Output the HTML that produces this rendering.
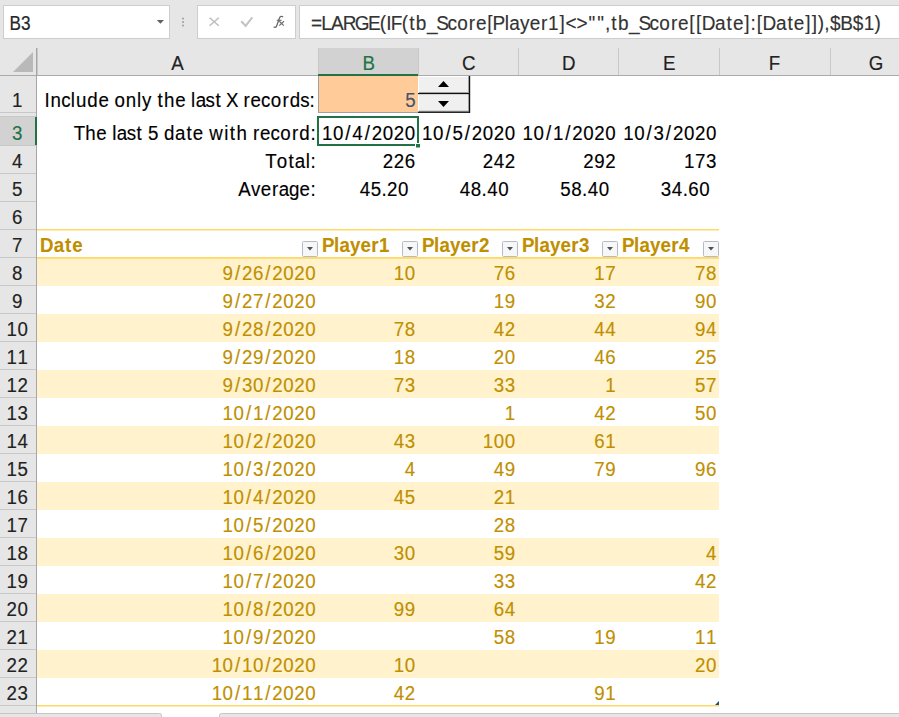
<!DOCTYPE html>
<html><head><meta charset="utf-8"><style>
html,body{margin:0;padding:0;width:899px;height:717px;overflow:hidden;background:#fff}
svg{display:block}
text{font-family:"Liberation Sans",sans-serif}
</style></head><body>
<svg width="899" height="717" viewBox="0 0 899 717">
<rect x="0" y="0" width="899" height="717" fill="#ffffff" />
<rect x="0" y="0" width="899" height="48" fill="#e6e6e6" />
<rect x="3.5" y="5.5" width="166" height="33" fill="#ffffff" stroke="#cdcdcd" stroke-width="1"/>
<text x="9.6" y="29.7" fill="#262626" font-size="19.5" textLength="21.00" lengthAdjust="spacingAndGlyphs" stroke="#262626" stroke-width="0.2">B3</text>
<path d="M156.8 20 L164 20 L160.4 23.8 Z" fill="#5e626a"/>
<rect x="182.2" y="17.7" width="1.7" height="1.7" fill="#9c9c9c" />
<rect x="182.2" y="21.2" width="1.7" height="1.7" fill="#9c9c9c" />
<rect x="182.2" y="24.7" width="1.7" height="1.7" fill="#9c9c9c" />
<rect x="197.5" y="5.5" width="98" height="33" fill="#ffffff" stroke="#cdcdcd" stroke-width="1"/>
<path d="M209.6 17.8 L218.8 25.8 M218.8 17.8 L209.6 25.8" stroke="#bdbdbd" stroke-width="1.5" fill="none"/>
<path d="M241.2 21.3 L245.6 25.8 L252.3 17.3" stroke="#c4c4c4" stroke-width="2.1" fill="none"/>
<path d="M283 17.2 C282.2 16 280.2 15.9 279.5 18 L276.6 26 C276 27.6 274.8 27.6 273.6 26.8" stroke="#6a6a6a" stroke-width="1.3" fill="none"/>
<path d="M276.8 20.3 L281.6 20.3" stroke="#6a6a6a" stroke-width="1.1" fill="none"/>
<path d="M279.3 21.2 L283.8 25.6 M284 21.2 L279.2 25.6" stroke="#707078" stroke-width="1.2" fill="none"/>
<rect x="299.5" y="5.5" width="640" height="33" fill="#ffffff" stroke="#cdcdcd" stroke-width="1"/>
<text x="323.90 334.64 344.82 356.93 369.63 383.35 395.59 402.41 407.14 418.50 426.25 433.20 444.77 454.51 466.12 476.29 488.38 495.72 507.55 512.98 525.81 530.50 541.57 551.74 563.50 570.94 582.87 589.02 600.46 612.97 622.02 630.12 636.72 643.68 655.25 664.98 676.59 686.76 698.86 706.20 718.02 724.94 730.94 744.93 756.87 763.51 775.34 781.81 788.29 794.29 808.28 820.23 826.87 838.69 845.60 851.94 858.72 864.50 875.26 888.22 899.66 911.01" y="29.7" fill="#333" stroke="#333" stroke-width="0.15" font-size="19.8"  transform="scale(0.96 1)">=LARGE(IF(tb_Score[Player1]&lt;&gt;&quot;&quot;,tb_Score[[Date]:[Date]]),$B$1)</text>
<rect x="0" y="48" width="899" height="27" fill="#e6e6e6" />
<rect x="318" y="48" width="100" height="26" fill="#d2d2d2" />
<rect x="37" y="48" width="1" height="27" fill="#c8c8c8"/>
<rect x="318" y="48" width="1" height="27" fill="#c8c8c8"/>
<rect x="418" y="48" width="1" height="27" fill="#c8c8c8"/>
<rect x="518" y="48" width="1" height="27" fill="#c8c8c8"/>
<rect x="618" y="48" width="1" height="27" fill="#c8c8c8"/>
<rect x="719" y="48" width="1" height="27" fill="#c8c8c8"/>
<rect x="830" y="48" width="1" height="27" fill="#c8c8c8"/>
<text x="178.39" y="70" fill="#222" stroke="#222" stroke-width="0.15" font-size="19.5"  transform="scale(0.96 1)">A</text>
<text x="377.66" y="70" fill="#217346" stroke="#217346" stroke-width="0.15" font-size="19.5"  transform="scale(0.96 1)">B</text>
<text x="481.29" y="70" fill="#222" stroke="#222" stroke-width="0.15" font-size="19.5"  transform="scale(0.96 1)">C</text>
<text x="585.46" y="70" fill="#222" stroke="#222" stroke-width="0.15" font-size="19.5"  transform="scale(0.96 1)">D</text>
<text x="690.68" y="70" fill="#222" stroke="#222" stroke-width="0.15" font-size="19.5"  transform="scale(0.96 1)">E</text>
<text x="800.82" y="70" fill="#222" stroke="#222" stroke-width="0.15" font-size="19.5"  transform="scale(0.96 1)">F</text>
<text x="904.92" y="70" fill="#222" stroke="#222" stroke-width="0.15" font-size="19.5"  transform="scale(0.96 1)">G</text>
<rect x="0" y="75" width="899" height="1" fill="#ababab"/>
<rect x="318" y="74" width="100" height="2" fill="#217346" />
<path d="M13 72 L33 72 L33 52 Z" fill="#b9b9b9"/>
<rect x="0" y="76" width="36" height="641" fill="#e6e6e6" />
<rect x="0" y="117" width="35" height="28" fill="#d2d2d2" />
<rect x="0" y="112" width="36" height="1" fill="#c8c8c8"/>
<rect x="0" y="116" width="36" height="1" fill="#c8c8c8"/>
<rect x="0" y="145" width="36" height="1" fill="#c8c8c8"/>
<rect x="0" y="173" width="36" height="1" fill="#c8c8c8"/>
<rect x="0" y="201" width="36" height="1" fill="#c8c8c8"/>
<rect x="0" y="229" width="36" height="1" fill="#c8c8c8"/>
<rect x="0" y="257" width="36" height="1" fill="#c8c8c8"/>
<rect x="0" y="285" width="36" height="1" fill="#c8c8c8"/>
<rect x="0" y="313" width="36" height="1" fill="#c8c8c8"/>
<rect x="0" y="341" width="36" height="1" fill="#c8c8c8"/>
<rect x="0" y="369" width="36" height="1" fill="#c8c8c8"/>
<rect x="0" y="397" width="36" height="1" fill="#c8c8c8"/>
<rect x="0" y="425" width="36" height="1" fill="#c8c8c8"/>
<rect x="0" y="453" width="36" height="1" fill="#c8c8c8"/>
<rect x="0" y="481" width="36" height="1" fill="#c8c8c8"/>
<rect x="0" y="509" width="36" height="1" fill="#c8c8c8"/>
<rect x="0" y="537" width="36" height="1" fill="#c8c8c8"/>
<rect x="0" y="565" width="36" height="1" fill="#c8c8c8"/>
<rect x="0" y="593" width="36" height="1" fill="#c8c8c8"/>
<rect x="0" y="621" width="36" height="1" fill="#c8c8c8"/>
<rect x="0" y="649" width="36" height="1" fill="#c8c8c8"/>
<rect x="0" y="677" width="36" height="1" fill="#c8c8c8"/>
<rect x="0" y="705" width="36" height="1" fill="#c8c8c8"/>
<rect x="0" y="733" width="36" height="1" fill="#c8c8c8"/>
<text x="12.60" y="107" fill="#222" stroke="#222" stroke-width="0.15" font-size="19.5"  transform="scale(0.96 1)">1</text>
<text x="12.60" y="140" fill="#217346" stroke="#217346" stroke-width="0.15" font-size="19.5"  transform="scale(0.96 1)">3</text>
<text x="12.60" y="168" fill="#222" stroke="#222" stroke-width="0.15" font-size="19.5"  transform="scale(0.96 1)">4</text>
<text x="12.60" y="196" fill="#222" stroke="#222" stroke-width="0.15" font-size="19.5"  transform="scale(0.96 1)">5</text>
<text x="12.60" y="224" fill="#222" stroke="#222" stroke-width="0.15" font-size="19.5"  transform="scale(0.96 1)">6</text>
<text x="12.60" y="252" fill="#222" stroke="#222" stroke-width="0.15" font-size="19.5"  transform="scale(0.96 1)">7</text>
<text x="12.60" y="280" fill="#222" stroke="#222" stroke-width="0.15" font-size="19.5"  transform="scale(0.96 1)">8</text>
<text x="12.60" y="308" fill="#222" stroke="#222" stroke-width="0.15" font-size="19.5"  transform="scale(0.96 1)">9</text>
<text x="6.88 18.32" y="336" fill="#222" stroke="#222" stroke-width="0.15" font-size="19.5"  transform="scale(0.96 1)">10</text>
<text x="6.88 18.32" y="364" fill="#222" stroke="#222" stroke-width="0.15" font-size="19.5"  transform="scale(0.96 1)">11</text>
<text x="6.88 18.32" y="392" fill="#222" stroke="#222" stroke-width="0.15" font-size="19.5"  transform="scale(0.96 1)">12</text>
<text x="6.88 18.32" y="420" fill="#222" stroke="#222" stroke-width="0.15" font-size="19.5"  transform="scale(0.96 1)">13</text>
<text x="6.88 18.32" y="448" fill="#222" stroke="#222" stroke-width="0.15" font-size="19.5"  transform="scale(0.96 1)">14</text>
<text x="6.88 18.32" y="476" fill="#222" stroke="#222" stroke-width="0.15" font-size="19.5"  transform="scale(0.96 1)">15</text>
<text x="6.88 18.32" y="504" fill="#222" stroke="#222" stroke-width="0.15" font-size="19.5"  transform="scale(0.96 1)">16</text>
<text x="6.88 18.32" y="532" fill="#222" stroke="#222" stroke-width="0.15" font-size="19.5"  transform="scale(0.96 1)">17</text>
<text x="6.88 18.32" y="560" fill="#222" stroke="#222" stroke-width="0.15" font-size="19.5"  transform="scale(0.96 1)">18</text>
<text x="6.88 18.32" y="588" fill="#222" stroke="#222" stroke-width="0.15" font-size="19.5"  transform="scale(0.96 1)">19</text>
<text x="6.88 18.32" y="616" fill="#222" stroke="#222" stroke-width="0.15" font-size="19.5"  transform="scale(0.96 1)">20</text>
<text x="6.88 18.32" y="644" fill="#222" stroke="#222" stroke-width="0.15" font-size="19.5"  transform="scale(0.96 1)">21</text>
<text x="6.88 18.32" y="672" fill="#222" stroke="#222" stroke-width="0.15" font-size="19.5"  transform="scale(0.96 1)">22</text>
<text x="6.88 18.32" y="700" fill="#222" stroke="#222" stroke-width="0.15" font-size="19.5"  transform="scale(0.96 1)">23</text>
<rect x="36" y="48" width="1" height="665" fill="#a6a6a6"/>
<rect x="35" y="117" width="2" height="28" fill="#217346" />
<rect x="37" y="258" width="682" height="28" fill="#fff2cc" />
<rect x="37" y="314" width="682" height="28" fill="#fff2cc" />
<rect x="37" y="370" width="682" height="28" fill="#fff2cc" />
<rect x="37" y="426" width="682" height="28" fill="#fff2cc" />
<rect x="37" y="482" width="682" height="28" fill="#fff2cc" />
<rect x="37" y="538" width="682" height="28" fill="#fff2cc" />
<rect x="37" y="594" width="682" height="28" fill="#fff2cc" />
<rect x="37" y="650" width="682" height="28" fill="#fff2cc" />
<rect x="37" y="229" width="682" height="1.5" fill="#ffd966"/>
<rect x="37" y="257" width="682" height="1.8" fill="#ffd966"/>
<rect x="37" y="705" width="682" height="1.5" fill="#ffd966"/>
<rect x="318" y="76" width="100" height="36" fill="#ffcc99" />
<rect x="318" y="76" width="1" height="36" fill="#a0a0a0"/>
<rect x="318" y="112" width="100" height="1" fill="#a0a0a0"/>
<text x="46.45 52.51 63.76 73.83 79.10 90.96 102.50 113.38 119.17 131.05 142.83 147.82 157.65 163.98 170.97 182.52 193.40 199.09 203.83 214.19 224.55 230.89 235.51 247.72 253.67 261.04 271.98 282.15 294.22 301.90 312.80 322.40" y="107" fill="#000" stroke="#000" stroke-width="0.15" font-size="19.5"  transform="scale(0.96 1)">Include only the last X records:</text>
<text x="422.19" y="107" fill="#44546a" stroke="#44546a" stroke-width="0.15" font-size="19.5"  transform="scale(0.96 1)">5</text>
<rect x="418" y="76" width="52" height="36" fill="#f0f0f0" />
<rect x="418" y="76" width="51" height="1" fill="#ffffff"/>
<rect x="418" y="76" width="1" height="17" fill="#ffffff"/>
<rect x="418" y="94" width="51" height="1" fill="#ffffff"/>
<rect x="418" y="94" width="1" height="18" fill="#ffffff"/>
<rect x="419" y="92" width="50" height="1" fill="#a0a0a0"/>
<rect x="468" y="76" width="1" height="17" fill="#a0a0a0"/>
<rect x="419" y="110.7" width="50" height="1" fill="#a0a0a0"/>
<rect x="468" y="94" width="1" height="18" fill="#a0a0a0"/>
<rect x="418" y="93" width="52" height="1.2" fill="#111"/>
<rect x="418" y="111.6" width="52" height="1.3" fill="#111"/>
<rect x="469" y="76" width="1.2" height="36.900000000000006" fill="#111"/>
<path d="M438 87 L449 87 L443.5 81 Z" fill="#000"/>
<path d="M438 101 L449 101 L443.5 107 Z" fill="#000"/>
<text x="76.76 88.72 100.27 111.15 116.83 121.57 131.94 142.30 148.64 154.19 165.18 170.95 182.28 194.18 200.87 211.75 218.03 233.57 239.40 246.39 257.59 263.54 270.91 281.85 292.02 304.09 311.77 323.44" y="140" fill="#000" stroke="#000" stroke-width="0.15" font-size="19.5"  transform="scale(0.96 1)">The last 5 date with record:</text>
<text x="335.44 346.88 359.69 367.06 379.87 387.24 398.68 410.12 421.57" y="140" fill="#000" stroke="#000" stroke-width="0.15" font-size="19.5"  transform="scale(0.96 1)">10/4/2020</text>
<text x="439.71 451.15 463.96 471.33 484.14 491.51 502.95 514.40 525.84" y="140" fill="#000" stroke="#000" stroke-width="0.15" font-size="19.5"  transform="scale(0.96 1)">10/5/2020</text>
<text x="544.40 555.84 568.64 576.02 588.82 596.20 607.64 619.08 630.52" y="140" fill="#000" stroke="#000" stroke-width="0.15" font-size="19.5"  transform="scale(0.96 1)">10/1/2020</text>
<text x="649.19 660.63 673.44 680.81 693.62 700.99 712.43 723.87 735.32" y="140" fill="#000" stroke="#000" stroke-width="0.15" font-size="19.5"  transform="scale(0.96 1)">10/3/2020</text>
<rect x="318" y="117" width="100" height="28" fill="none" stroke="#217346" stroke-width="2"/>
<rect x="415.5" y="143.5" width="5" height="4.5" fill="#217346" stroke="#fff" stroke-width="1"/>
<text x="276.21 288.20 300.64 307.12 318.37 323.44" y="168" fill="#000" stroke="#000" stroke-width="0.15" font-size="19.5"  transform="scale(0.96 1)">Total:</text>
<text x="248.13 261.38 271.55 283.28 290.44 301.16 312.09 323.44" y="196" fill="#000" stroke="#000" stroke-width="0.15" font-size="19.5"  transform="scale(0.96 1)">Average:</text>
<text x="398.68 410.12 421.57" y="168" fill="#000" stroke="#000" stroke-width="0.15" font-size="19.5"  transform="scale(0.96 1)">226</text>
<text x="502.95 514.40 525.84" y="168" fill="#000" stroke="#000" stroke-width="0.15" font-size="19.5"  transform="scale(0.96 1)">242</text>
<text x="607.64 619.08 630.52" y="168" fill="#000" stroke="#000" stroke-width="0.15" font-size="19.5"  transform="scale(0.96 1)">292</text>
<text x="712.43 723.87 735.32" y="168" fill="#000" stroke="#000" stroke-width="0.15" font-size="19.5"  transform="scale(0.96 1)">173</text>
<text x="374.67 386.11 397.39 403.25 414.69" y="196" fill="#000" stroke="#000" stroke-width="0.15" font-size="19.5"  transform="scale(0.96 1)">45.20</text>
<text x="478.94 490.38 501.66 507.52 518.96" y="196" fill="#000" stroke="#000" stroke-width="0.15" font-size="19.5"  transform="scale(0.96 1)">48.40</text>
<text x="583.63 595.07 606.35 612.21 623.65" y="196" fill="#000" stroke="#000" stroke-width="0.15" font-size="19.5"  transform="scale(0.96 1)">58.40</text>
<text x="688.42 699.86 711.14 717.00 728.44" y="196" fill="#000" stroke="#000" stroke-width="0.15" font-size="19.5"  transform="scale(0.96 1)">34.60</text>
<text x="41.75 56.06 67.74 75.18" y="252" fill="#bf8f00" stroke="#bf8f00" stroke-width="0.12" font-size="19.5" font-weight="bold"  transform="scale(0.96 1)">Date</text>
<text x="335.45 348.04 353.67 364.51 375.46 386.71 394.74" y="252" fill="#bf8f00" stroke="#bf8f00" stroke-width="0.12" font-size="19.5" font-weight="bold"  transform="scale(0.96 1)">Player1</text>
<text x="439.62 452.20 457.83 468.67 479.63 490.88 498.91" y="252" fill="#bf8f00" stroke="#bf8f00" stroke-width="0.12" font-size="19.5" font-weight="bold"  transform="scale(0.96 1)">Player2</text>
<text x="543.79 556.37 562.00 572.84 583.80 595.05 603.07" y="252" fill="#bf8f00" stroke="#bf8f00" stroke-width="0.12" font-size="19.5" font-weight="bold"  transform="scale(0.96 1)">Player3</text>
<text x="647.95 660.54 666.17 677.01 687.96 699.21 707.24" y="252" fill="#bf8f00" stroke="#bf8f00" stroke-width="0.12" font-size="19.5" font-weight="bold"  transform="scale(0.96 1)">Player4</text>
<rect x="302.5" y="241.5" width="15" height="15" rx="1" fill="#f6f7f9" stroke="#b7bcc4" stroke-width="1"/>
<path d="M307 247 L313 247 L310 250.5 Z" fill="#505050"/>
<rect x="402.5" y="241.5" width="15" height="15" rx="1" fill="#f6f7f9" stroke="#b7bcc4" stroke-width="1"/>
<path d="M407 247 L413 247 L410 250.5 Z" fill="#505050"/>
<rect x="502.5" y="241.5" width="15" height="15" rx="1" fill="#f6f7f9" stroke="#b7bcc4" stroke-width="1"/>
<path d="M507 247 L513 247 L510 250.5 Z" fill="#505050"/>
<rect x="602.5" y="241.5" width="15" height="15" rx="1" fill="#f6f7f9" stroke="#b7bcc4" stroke-width="1"/>
<path d="M607 247 L613 247 L610 250.5 Z" fill="#505050"/>
<rect x="703.5" y="241.5" width="15" height="15" rx="1" fill="#f6f7f9" stroke="#b7bcc4" stroke-width="1"/>
<path d="M708 247 L714 247 L711 250.5 Z" fill="#505050"/>
<text x="231.90 244.70 252.08 263.52 276.32 283.70 295.14 306.58 318.02" y="280" fill="#bf8f00" stroke="#bf8f00" stroke-width="0.15" font-size="19.5"  transform="scale(0.96 1)">9/26/2020</text>
<text x="410.12 421.57" y="280" fill="#bf8f00" stroke="#bf8f00" stroke-width="0.15" font-size="19.5"  transform="scale(0.96 1)">10</text>
<text x="514.40 525.84" y="280" fill="#bf8f00" stroke="#bf8f00" stroke-width="0.15" font-size="19.5"  transform="scale(0.96 1)">76</text>
<text x="619.08 630.52" y="280" fill="#bf8f00" stroke="#bf8f00" stroke-width="0.15" font-size="19.5"  transform="scale(0.96 1)">17</text>
<text x="723.87 735.32" y="280" fill="#bf8f00" stroke="#bf8f00" stroke-width="0.15" font-size="19.5"  transform="scale(0.96 1)">78</text>
<text x="231.90 244.70 252.08 263.52 276.32 283.70 295.14 306.58 318.02" y="308" fill="#bf8f00" stroke="#bf8f00" stroke-width="0.15" font-size="19.5"  transform="scale(0.96 1)">9/27/2020</text>
<text x="514.40 525.84" y="308" fill="#bf8f00" stroke="#bf8f00" stroke-width="0.15" font-size="19.5"  transform="scale(0.96 1)">19</text>
<text x="619.08 630.52" y="308" fill="#bf8f00" stroke="#bf8f00" stroke-width="0.15" font-size="19.5"  transform="scale(0.96 1)">32</text>
<text x="723.87 735.32" y="308" fill="#bf8f00" stroke="#bf8f00" stroke-width="0.15" font-size="19.5"  transform="scale(0.96 1)">90</text>
<text x="231.90 244.70 252.08 263.52 276.32 283.70 295.14 306.58 318.02" y="336" fill="#bf8f00" stroke="#bf8f00" stroke-width="0.15" font-size="19.5"  transform="scale(0.96 1)">9/28/2020</text>
<text x="410.12 421.57" y="336" fill="#bf8f00" stroke="#bf8f00" stroke-width="0.15" font-size="19.5"  transform="scale(0.96 1)">78</text>
<text x="514.40 525.84" y="336" fill="#bf8f00" stroke="#bf8f00" stroke-width="0.15" font-size="19.5"  transform="scale(0.96 1)">42</text>
<text x="619.08 630.52" y="336" fill="#bf8f00" stroke="#bf8f00" stroke-width="0.15" font-size="19.5"  transform="scale(0.96 1)">44</text>
<text x="723.87 735.32" y="336" fill="#bf8f00" stroke="#bf8f00" stroke-width="0.15" font-size="19.5"  transform="scale(0.96 1)">94</text>
<text x="231.90 244.70 252.08 263.52 276.32 283.70 295.14 306.58 318.02" y="364" fill="#bf8f00" stroke="#bf8f00" stroke-width="0.15" font-size="19.5"  transform="scale(0.96 1)">9/29/2020</text>
<text x="410.12 421.57" y="364" fill="#bf8f00" stroke="#bf8f00" stroke-width="0.15" font-size="19.5"  transform="scale(0.96 1)">18</text>
<text x="514.40 525.84" y="364" fill="#bf8f00" stroke="#bf8f00" stroke-width="0.15" font-size="19.5"  transform="scale(0.96 1)">20</text>
<text x="619.08 630.52" y="364" fill="#bf8f00" stroke="#bf8f00" stroke-width="0.15" font-size="19.5"  transform="scale(0.96 1)">46</text>
<text x="723.87 735.32" y="364" fill="#bf8f00" stroke="#bf8f00" stroke-width="0.15" font-size="19.5"  transform="scale(0.96 1)">25</text>
<text x="231.90 244.70 252.08 263.52 276.32 283.70 295.14 306.58 318.02" y="392" fill="#bf8f00" stroke="#bf8f00" stroke-width="0.15" font-size="19.5"  transform="scale(0.96 1)">9/30/2020</text>
<text x="410.12 421.57" y="392" fill="#bf8f00" stroke="#bf8f00" stroke-width="0.15" font-size="19.5"  transform="scale(0.96 1)">73</text>
<text x="514.40 525.84" y="392" fill="#bf8f00" stroke="#bf8f00" stroke-width="0.15" font-size="19.5"  transform="scale(0.96 1)">33</text>
<text x="630.52" y="392" fill="#bf8f00" stroke="#bf8f00" stroke-width="0.15" font-size="19.5"  transform="scale(0.96 1)">1</text>
<text x="723.87 735.32" y="392" fill="#bf8f00" stroke="#bf8f00" stroke-width="0.15" font-size="19.5"  transform="scale(0.96 1)">57</text>
<text x="231.90 243.34 256.14 263.52 276.32 283.70 295.14 306.58 318.02" y="420" fill="#bf8f00" stroke="#bf8f00" stroke-width="0.15" font-size="19.5"  transform="scale(0.96 1)">10/1/2020</text>
<text x="525.84" y="420" fill="#bf8f00" stroke="#bf8f00" stroke-width="0.15" font-size="19.5"  transform="scale(0.96 1)">1</text>
<text x="619.08 630.52" y="420" fill="#bf8f00" stroke="#bf8f00" stroke-width="0.15" font-size="19.5"  transform="scale(0.96 1)">42</text>
<text x="723.87 735.32" y="420" fill="#bf8f00" stroke="#bf8f00" stroke-width="0.15" font-size="19.5"  transform="scale(0.96 1)">50</text>
<text x="231.90 243.34 256.14 263.52 276.32 283.70 295.14 306.58 318.02" y="448" fill="#bf8f00" stroke="#bf8f00" stroke-width="0.15" font-size="19.5"  transform="scale(0.96 1)">10/2/2020</text>
<text x="410.12 421.57" y="448" fill="#bf8f00" stroke="#bf8f00" stroke-width="0.15" font-size="19.5"  transform="scale(0.96 1)">43</text>
<text x="502.95 514.40 525.84" y="448" fill="#bf8f00" stroke="#bf8f00" stroke-width="0.15" font-size="19.5"  transform="scale(0.96 1)">100</text>
<text x="619.08 630.52" y="448" fill="#bf8f00" stroke="#bf8f00" stroke-width="0.15" font-size="19.5"  transform="scale(0.96 1)">61</text>
<text x="231.90 243.34 256.14 263.52 276.32 283.70 295.14 306.58 318.02" y="476" fill="#bf8f00" stroke="#bf8f00" stroke-width="0.15" font-size="19.5"  transform="scale(0.96 1)">10/3/2020</text>
<text x="421.57" y="476" fill="#bf8f00" stroke="#bf8f00" stroke-width="0.15" font-size="19.5"  transform="scale(0.96 1)">4</text>
<text x="514.40 525.84" y="476" fill="#bf8f00" stroke="#bf8f00" stroke-width="0.15" font-size="19.5"  transform="scale(0.96 1)">49</text>
<text x="619.08 630.52" y="476" fill="#bf8f00" stroke="#bf8f00" stroke-width="0.15" font-size="19.5"  transform="scale(0.96 1)">79</text>
<text x="723.87 735.32" y="476" fill="#bf8f00" stroke="#bf8f00" stroke-width="0.15" font-size="19.5"  transform="scale(0.96 1)">96</text>
<text x="231.90 243.34 256.14 263.52 276.32 283.70 295.14 306.58 318.02" y="504" fill="#bf8f00" stroke="#bf8f00" stroke-width="0.15" font-size="19.5"  transform="scale(0.96 1)">10/4/2020</text>
<text x="410.12 421.57" y="504" fill="#bf8f00" stroke="#bf8f00" stroke-width="0.15" font-size="19.5"  transform="scale(0.96 1)">45</text>
<text x="514.40 525.84" y="504" fill="#bf8f00" stroke="#bf8f00" stroke-width="0.15" font-size="19.5"  transform="scale(0.96 1)">21</text>
<text x="231.90 243.34 256.14 263.52 276.32 283.70 295.14 306.58 318.02" y="532" fill="#bf8f00" stroke="#bf8f00" stroke-width="0.15" font-size="19.5"  transform="scale(0.96 1)">10/5/2020</text>
<text x="514.40 525.84" y="532" fill="#bf8f00" stroke="#bf8f00" stroke-width="0.15" font-size="19.5"  transform="scale(0.96 1)">28</text>
<text x="231.90 243.34 256.14 263.52 276.32 283.70 295.14 306.58 318.02" y="560" fill="#bf8f00" stroke="#bf8f00" stroke-width="0.15" font-size="19.5"  transform="scale(0.96 1)">10/6/2020</text>
<text x="410.12 421.57" y="560" fill="#bf8f00" stroke="#bf8f00" stroke-width="0.15" font-size="19.5"  transform="scale(0.96 1)">30</text>
<text x="514.40 525.84" y="560" fill="#bf8f00" stroke="#bf8f00" stroke-width="0.15" font-size="19.5"  transform="scale(0.96 1)">59</text>
<text x="735.32" y="560" fill="#bf8f00" stroke="#bf8f00" stroke-width="0.15" font-size="19.5"  transform="scale(0.96 1)">4</text>
<text x="231.90 243.34 256.14 263.52 276.32 283.70 295.14 306.58 318.02" y="588" fill="#bf8f00" stroke="#bf8f00" stroke-width="0.15" font-size="19.5"  transform="scale(0.96 1)">10/7/2020</text>
<text x="514.40 525.84" y="588" fill="#bf8f00" stroke="#bf8f00" stroke-width="0.15" font-size="19.5"  transform="scale(0.96 1)">33</text>
<text x="723.87 735.32" y="588" fill="#bf8f00" stroke="#bf8f00" stroke-width="0.15" font-size="19.5"  transform="scale(0.96 1)">42</text>
<text x="231.90 243.34 256.14 263.52 276.32 283.70 295.14 306.58 318.02" y="616" fill="#bf8f00" stroke="#bf8f00" stroke-width="0.15" font-size="19.5"  transform="scale(0.96 1)">10/8/2020</text>
<text x="410.12 421.57" y="616" fill="#bf8f00" stroke="#bf8f00" stroke-width="0.15" font-size="19.5"  transform="scale(0.96 1)">99</text>
<text x="514.40 525.84" y="616" fill="#bf8f00" stroke="#bf8f00" stroke-width="0.15" font-size="19.5"  transform="scale(0.96 1)">64</text>
<text x="231.90 243.34 256.14 263.52 276.32 283.70 295.14 306.58 318.02" y="644" fill="#bf8f00" stroke="#bf8f00" stroke-width="0.15" font-size="19.5"  transform="scale(0.96 1)">10/9/2020</text>
<text x="514.40 525.84" y="644" fill="#bf8f00" stroke="#bf8f00" stroke-width="0.15" font-size="19.5"  transform="scale(0.96 1)">58</text>
<text x="619.08 630.52" y="644" fill="#bf8f00" stroke="#bf8f00" stroke-width="0.15" font-size="19.5"  transform="scale(0.96 1)">19</text>
<text x="723.87 735.32" y="644" fill="#bf8f00" stroke="#bf8f00" stroke-width="0.15" font-size="19.5"  transform="scale(0.96 1)">11</text>
<text x="220.46 231.90 244.70 252.08 263.52 276.32 283.70 295.14 306.58 318.02" y="672" fill="#bf8f00" stroke="#bf8f00" stroke-width="0.15" font-size="19.5"  transform="scale(0.96 1)">10/10/2020</text>
<text x="410.12 421.57" y="672" fill="#bf8f00" stroke="#bf8f00" stroke-width="0.15" font-size="19.5"  transform="scale(0.96 1)">10</text>
<text x="723.87 735.32" y="672" fill="#bf8f00" stroke="#bf8f00" stroke-width="0.15" font-size="19.5"  transform="scale(0.96 1)">20</text>
<text x="220.46 231.90 244.70 252.08 263.52 276.32 283.70 295.14 306.58 318.02" y="700" fill="#bf8f00" stroke="#bf8f00" stroke-width="0.15" font-size="19.5"  transform="scale(0.96 1)">10/11/2020</text>
<text x="410.12 421.57" y="700" fill="#bf8f00" stroke="#bf8f00" stroke-width="0.15" font-size="19.5"  transform="scale(0.96 1)">42</text>
<text x="619.08 630.52" y="700" fill="#bf8f00" stroke="#bf8f00" stroke-width="0.15" font-size="19.5"  transform="scale(0.96 1)">91</text>
<path d="M715 705 L719 705 L719 701 Z" fill="#1f4e79"/>
<path d="M-2 720 L-2 713.5 L159.5 713.5 Q161.5 713.5 161.5 715.5 L161.5 720 Z" fill="#e6e6e6" stroke="#c6c6c6" stroke-width="1"/>
<path d="M219.5 720 L219.5 715.5 Q219.5 713.5 221.5 713.5 L902 713.5 L902 720 Z" fill="#e6e6e6" stroke="#c6c6c6" stroke-width="1"/>
</svg>
</body></html>
